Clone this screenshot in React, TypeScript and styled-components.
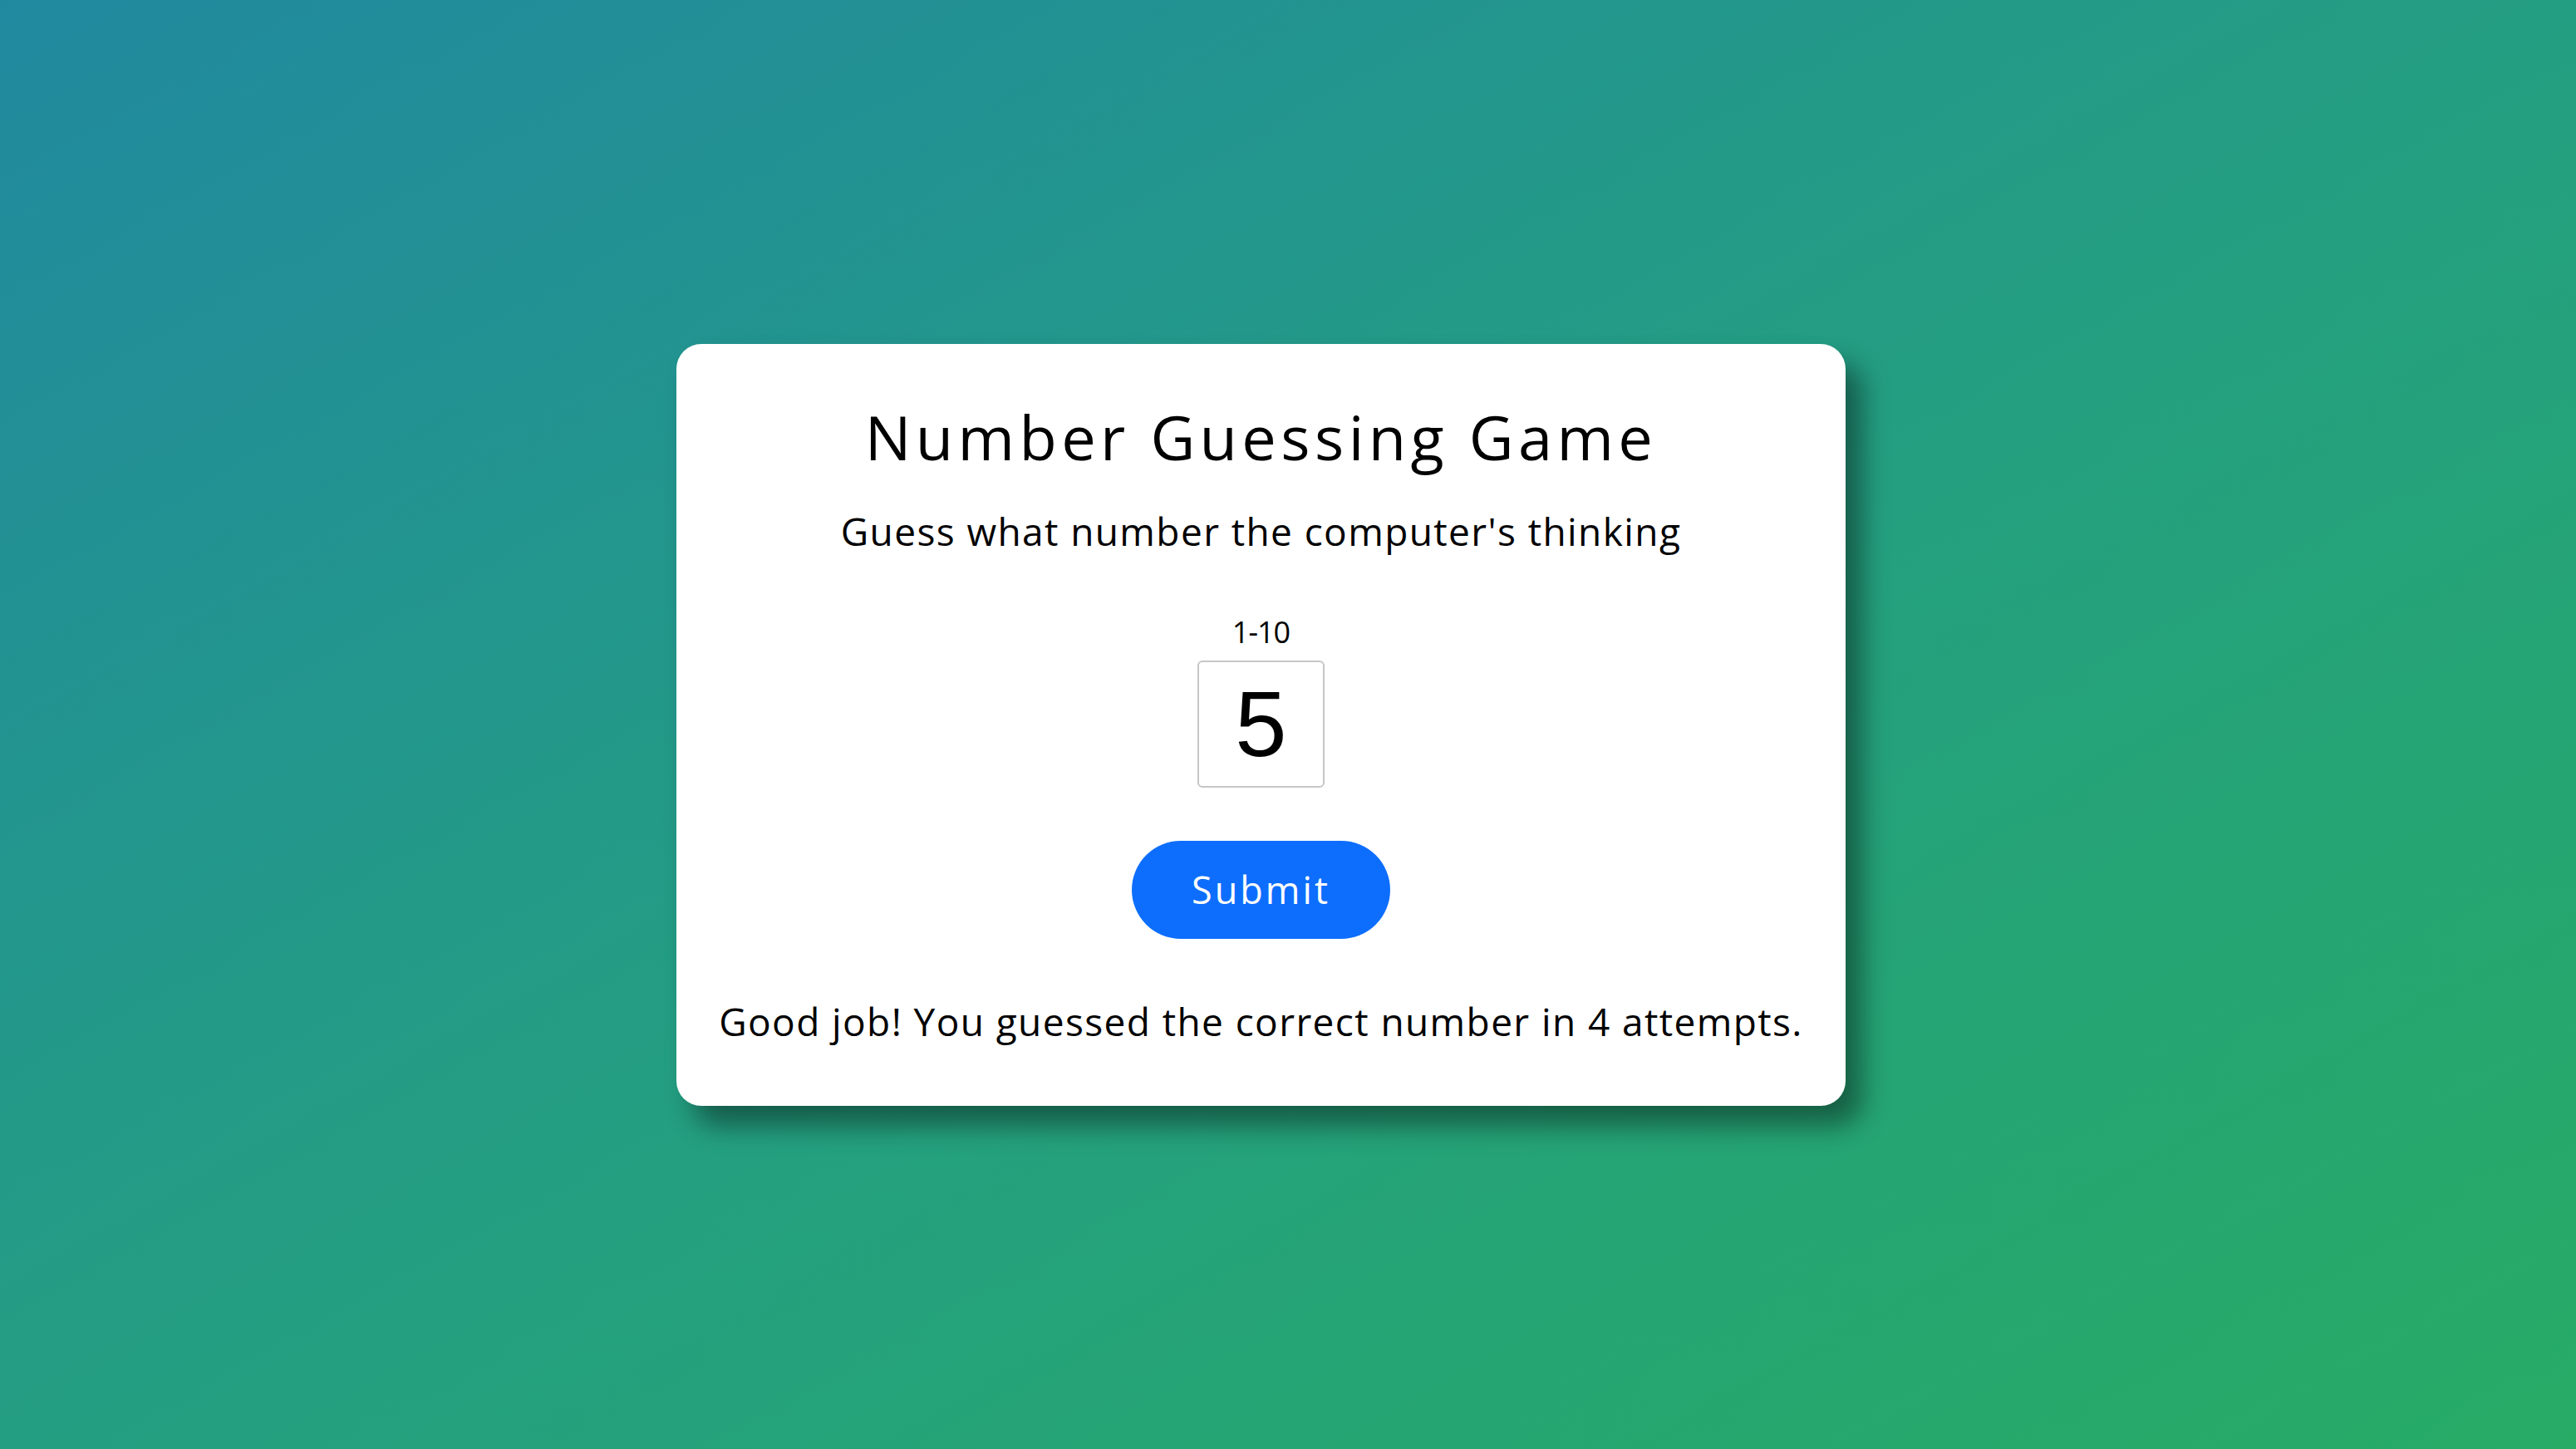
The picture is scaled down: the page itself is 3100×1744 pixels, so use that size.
import styled, { createGlobalStyle } from 'styled-components';

const GlobalStyle = createGlobalStyle`
  html, body {
    margin: 0;
    padding: 0;
  }
  body {
    font-family: 'Open Sans', 'Liberation Sans', sans-serif;
    color: #000;
  }
`;

const Page = styled.main`
  width: 100vw;
  height: 100vh;
  display: flex;
  align-items: center;
  justify-content: center;
  padding-right: 65px;
  box-sizing: border-box;
  background: linear-gradient(to bottom right, #21899f 0%, #24a07f 55%, #27ab65 100%);
`;

const Card = styled.section`
  width: 1407px;
  box-sizing: border-box;
  padding: 75px 40px 79px;
  background: #fff;
  border-radius: 30px;
  box-shadow: 20px 24px 32px rgba(0, 0, 0, 0.42);
  display: flex;
  flex-direction: column;
  align-items: center;
  text-align: center;
`;

const Title = styled.h1`
  margin: 0;
  font-size: 74px;
  line-height: 74px;
  font-weight: 400;
  letter-spacing: 5.4px;
`;

const Text = styled.p<{ $gap: number }>`
  margin: ${({ $gap }) => $gap}px 0 0;
  font-size: 46px;
  line-height: 45px;
  letter-spacing: 1.4px;
`;

const RangeLabel = styled.label`
  margin-top: 81px;
  font-size: 36px;
  line-height: 36px;
  letter-spacing: -1px;
`;

const GuessInput = styled.input`
  margin-top: 16px;
  width: 153px;
  height: 153px;
  box-sizing: border-box;
  border: 2px solid #c6c6c6;
  border-radius: 6px;
  font-family: 'Liberation Sans', Arial, sans-serif;
  font-size: 112px;
  text-align: center;
  color: #000;
  padding: 0;
  outline: none;
`;

const SubmitButton = styled.button`
  margin-top: 64px;
  width: 311px;
  height: 118px;
  border: none;
  border-radius: 59px;
  background: #0d6efd;
  color: #fff;
  font-family: 'Open Sans', 'Liberation Sans', sans-serif;
  font-size: 45px;
  letter-spacing: 3px;
  cursor: pointer;
`;

export default function App() {
  return (
    <>
      <GlobalStyle />
      <Page>
        <Card>
          <Title>Number Guessing Game</Title>
          <Text $gap={54}>Guess what number the computer's thinking</Text>
          <RangeLabel htmlFor="guess">1-10</RangeLabel>
          <GuessInput id="guess" type="text" value="5" readOnly />
          <SubmitButton type="button">Submit</SubmitButton>
          <Text $gap={77}>Good job! You guessed the correct number in 4 attempts.</Text>
        </Card>
      </Page>
    </>
  );
}
